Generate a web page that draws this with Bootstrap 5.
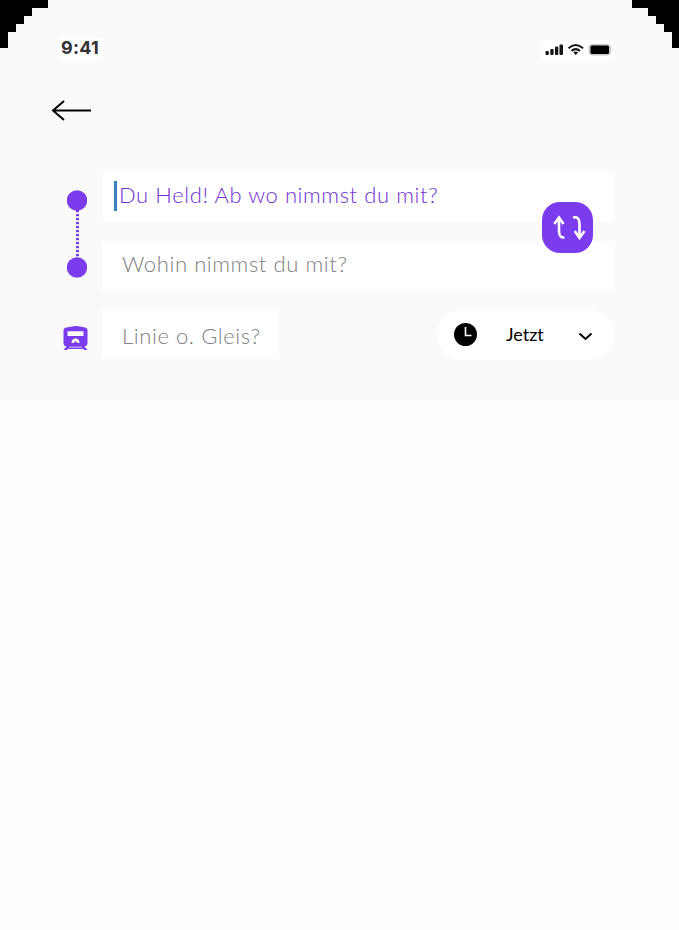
<!DOCTYPE html>
<html lang="de">
<head>
<meta charset="utf-8">
<meta name="viewport" content="width=device-width, initial-scale=1">
<title>Verbindung suchen</title>
<link href="https://cdn.jsdelivr.net/npm/bootstrap@5.3.0/dist/css/bootstrap.min.css" rel="stylesheet">
<style>
body{background:#fefefe;font-family:Lato,"Open Sans",sans-serif;overflow:hidden}
svg{display:block;flex:none}
.search-head{height:400px;background:#fafafa}
.corner{top:0}
.status{padding:37px 65px 0 60px}
.clock-time{width:43px;height:23px;font:700 18px/22px Inter,sans-serif;color:#333;letter-spacing:.3px;padding-left:1px}
.signals{width:73px;height:20px;margin-top:3px}
.back{margin:39px 0 0 51px;width:41px;height:22px}
.planner{margin:51px 64px 0 63px}
.rail{width:39px}
.rail-route{padding:18px 0 0 4px}
.rail-train{padding:16px 0 0}
.field{height:49px;font-size:22px;font-weight:300;line-height:46px;white-space:nowrap;color:#808080;letter-spacing:.59px}
.stops{gap:20px}
.field-from{color:#7030d4;padding-left:12px}
.from-text{padding-bottom:3px}
.caret{width:3px;height:30px;background:#3b82bd;margin:-2px 2px 0 0}
.field-to,.field-line{padding-left:20px}
.field-to{line-height:45px}
.field-line{width:177px;line-height:51px}
.swap{width:51px;height:51px;border-radius:18px;background:#7a3cec;right:22px;top:30px}
.third{margin-top:20px}
.when{width:178px;height:50px;padding:0 22px 2px 17px;color:#000}
.when-label{font-size:18px;line-height:48px;margin-left:29px}
.chevron{margin-top:4px}
</style>
<script src="https://cdn.jsdelivr.net/npm/bootstrap@5.3.0/dist/js/bootstrap.bundle.min.js"></script>
</head>
<body>
<header class="search-head position-relative">
  <svg class="corner position-absolute start-0" width="48" height="48"><path d="M0 0H48V8H32V16H24V24H16V32H8V48H0Z"/></svg>
  <svg class="corner position-absolute end-0" width="47" height="48"><path d="M0 0H47V48H40V32H32V24H24V16H16V8H0Z"/></svg>
  <div class="status d-flex justify-content-between">
    <div class="clock-time bg-white">9:41</div>
    <div class="signals bg-white">
      <svg width="74" height="20" viewBox="0 0 74 20">
        <g fill="#161616"><rect x="4.500" y="11" width="3.300" height="4" rx="1"/><rect x="9.300" y="9" width="3.300" height="6" rx="1"/><rect x="14" y="6.500" width="3.300" height="8.500" rx="1"/><rect x="18.500" y="4.500" width="3.500" height="10.500" rx="1"/></g>
        <g fill="none" stroke="#161616" stroke-width="2.100"><path d="M27.500 8.200Q34.700 1.800 42 8.200M30.500 11Q34.700 7.200 39 11"/></g><path d="M32.300 12.500Q34.700 10.700 37.200 12.500L34.700 15Z" fill="#161616"/>
        <rect x="48" y="4.500" width="21.500" height="10.500" rx="3" fill="#ccc" stroke="#c8c8c8"/><rect x="49.500" y="5.500" width="18.500" height="8.500" rx="1.500"/><path d="M71 8.500q2 1.500 0 3z" fill="#ccc"/>
      </svg>
    </div>
  </div>
  <svg class="back" viewBox="0 0 41 22" fill="none" stroke="#000" stroke-width="2"><path d="M2 11.500H40M13 2L2 11.500L13 21"/></svg>
  <main class="planner">
    <div class="d-flex position-relative">
      <div class="rail rail-route">
        <svg width="20" height="88" viewBox="0 0 20 88"><path d="M10.500 20V69" stroke="#7a3cec" stroke-width="3" stroke-dasharray="2.200 1.800"/><g fill="#7a3cec"><circle cx="10" cy="10.500" r="10.200"/><circle cx="10" cy="77.500" r="10.200"/></g></svg>
      </div>
      <div class="stops d-flex flex-column flex-grow-1">
        <div class="field field-from bg-white d-flex align-items-center"><span class="caret"></span><span class="from-text">Du Held! Ab wo nimmst du mit?</span></div>
        <div class="field field-to bg-white">Wohin nimmst du mit?</div>
      </div>
      <button class="swap position-absolute border-0 p-0" aria-label="Tauschen">
        <svg width="51" height="51" viewBox="0 0 51 51" fill="none" stroke="#fff" stroke-width="2.600"><path d="M17 16V29Q17 36 22.500 35.500M12.300 22L17 15.500L21.500 22M31 15.500Q37.500 14 37.500 22V36M32.800 29L37.500 36L42.500 29"/></svg>
      </button>
    </div>
    <div class="third d-flex">
      <div class="rail rail-train">
        <svg width="26" height="25" viewBox="0 0 26 25"><path fill="#7a3cec" fill-rule="evenodd" d="M8 .700Q13-.500 18 .700Q24.500 1.200 24.500 4V17Q24.500 20 21.500 20.500L24.500 24H21.500L20 23H5L3.500 24H.500L3.500 20.500Q.500 20 .500 17V4Q.500 1.200 8 .700ZM4.500 5.300V10H20.500V5.300ZM8.500 17H11Q11 15.500 12.500 15.500T14 17H16.500Q16.500 12.500 12.500 12.500T8.500 17ZM6 20.800L5.700 21.500H19.300L19 20.800Z"/></svg>
      </div>
      <div class="field field-line bg-white">Linie o. Gleis?</div>
      <div class="when bg-white rounded-pill d-flex align-items-center ms-auto">
        <svg width="23" height="23" viewBox="0 0 23 23"><circle cx="11.500" cy="11.500" r="11.500"/><path d="M11.500 4V12.500H17.500" fill="none" stroke="#fff" stroke-width="1.600"/></svg>
        <span class="when-label">Jetzt</span>
        <svg class="chevron ms-auto" width="15" height="10" viewBox="0 0 15 10" fill="none" stroke="#000" stroke-width="2"><path d="M1.500 2.500L7.500 8L13.500 2.500"/></svg>
      </div>
    </div>
  </main>
</header>
</body>
</html>
